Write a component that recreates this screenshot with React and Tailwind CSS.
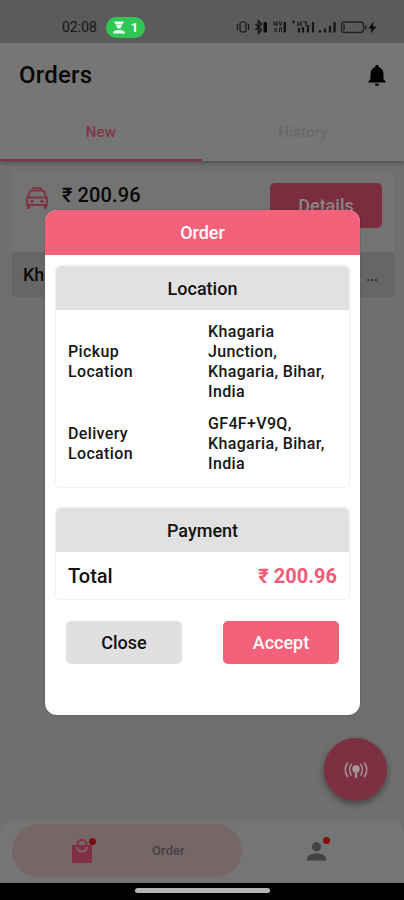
import React from 'react';
import { MdNotifications } from 'react-icons/md';

const locations = [
    { label: 'Pickup Location', value: 'Khagaria Junction, Khagaria, Bihar, India' },
    { label: 'Delivery Location', value: 'GF4F+V9Q, Khagaria, Bihar, India' },
];

const StatusIcons = () => (
    <svg width="142" height="16" viewBox="0 0 142 16" fill="none" stroke="#161616" strokeWidth="1.2">
        {/* vibrate */}
        <rect x="4" y="3" width="6" height="10" rx="2" />
        <path d="M1.500 5v6M12.500 5v6" />
        {/* bluetooth + level */}
        <path d="M19.500 5l6 6-3 3V2l3 3-6 6" strokeWidth="1.600" />
        <rect x="27.500" y="3" width="3.500" height="10.500" rx="1" fill="#0c0c0c" stroke="none" />
        {/* network speed */}
        <path d="M38 7V2.500l3 4.500V2.500M43 2.500l1.500 4.500 1-4.500M38 9l3 4M41 9l-3 4M43.500 13V9h2v4" strokeWidth="1" />
        <rect x="47.500" y="3" width="2.500" height="10.500" fill="#161616" stroke="none" />
        <path d="M56 3h3M57.500 1.500v3M62 7V2.500M65 2.500v4.500M62 5h3M67 3h3v4" />
        <path d="M63 13.500V9M67 13.500V8M72 13.500V6M77 13.500V3" strokeWidth="2.200" />
        <path d="M84 13.500v-2.500M89 13.500v-4M94 13.500V7M98.500 13.500V3" strokeWidth="2.300" />
        {/* battery */}
        <rect x="105.500" y="3" width="22" height="10.500" rx="3" strokeWidth="1.300" stroke="#222" />
        <path d="M108 5.500v5.500M129.700 6.500v4" strokeWidth="1.400" />
        <path d="M137.500 2.500l-5 7h3l-1 5 6-7h-3.500z" fill="#0c0c0c" stroke="none" />
    </svg>
);

const TaxiIcon = () => (
    <svg className="w-[22px] h-[22px] mt-[4px]" viewBox="0 0 22 22" fill="none" stroke="#7f3145" strokeWidth="2">
        <path d="M7.500 2.500V1h7v1.500" />
        <path d="M1.200 11.500L4 4.500q.4-1 1.500-1h11q1.100 0 1.500 1l2.800 7V18H1.200zM1.500 10.500h19" />
        <path d="M2.500 18v4M19.500 18v4" strokeWidth="3" />
        <circle cx="6" cy="14.300" r="1.600" fill="#7f3145" stroke="none" />
        <circle cx="16" cy="14.300" r="1.600" fill="#7f3145" stroke="none" />
    </svg>
);

const BagIcon = () => (
    <svg className="w-[20px] h-[24px]" viewBox="0 0 20 24" fill="none">
        <path d="M0 6h20v18H0z" fill="#803046" />
        <path d="M5.500 6.500V5.500a4.500 4.500 0 0 1 9 0v1" stroke="#803046" strokeWidth="2.200" />
        <path d="M5.200 8a4.800 4.500 0 0 0 9.600 0" stroke="#776668" strokeWidth="2.200" />
    </svg>
);

const PersonIcon = () => (
    <svg className="w-[19px] h-[19px]" viewBox="0 0 19 19" fill="#434343">
        <circle cx="9.500" cy="4.700" r="4.600" />
        <path d="M0 18.500v-2C0 13 5 11.500 9.500 11.500S19 13 19 16.500v2z" />
    </svg>
);

const StatusBar = () => (
    <div className="h-[43px] bg-[#5b5b5b] flex items-start justify-between pt-[17px] pl-[62px] pr-[26px]">
        <div className="flex items-center gap-2">
            <span className="text-[14px] leading-[21px] w-9 text-[#161616]">02:08</span>
            <div className="w-[39px] h-[21px] rounded-full bg-[#2fc653] flex items-center justify-center gap-[6px] text-white">
                <svg width="12" height="13" viewBox="0 0 12 13" fill="#e8ffee">
                    <path d="M1 0.500h10L9.500 3.500h-7zM3 4h6L7.500 7.500h-3zM0 12.500c0-2.500 2-3.500 6-3.500s6 1 6 3.500z" />
                </svg>
                <span className="text-[13px] font-bold">1</span>
            </div>
        </div>
        <div className="pt-[2px]">
            <StatusIcons />
        </div>
    </div>
);

const Header = () => (
    <div className="h-[118px] bg-[#767676] shadow-[0_2px_4px_rgba(0,0,0,0.3)] relative flex flex-col">
        <div className="h-[64px] pl-[19px] pr-[14px] flex items-center justify-between">
            <h1 className="text-[24px] tracking-[0.2px] font-medium text-[#060606]">Orders</h1>
            <MdNotifications className="w-[26px] h-[26px] text-black" />
        </div>
        <div className="flex-1 grid grid-cols-2 text-[15px] font-medium text-center">
            <div className="border-b-2 border-[#7d3042] text-[#85344a] pt-[14px] tracking-[0.2px]">New</div>
            <div className="text-[#686868] pt-[14px] tracking-[0.2px]">History</div>
        </div>
    </div>
);

const OrderCard = () => (
    <div className="mt-[11px] ml-[12px] mr-[10px] h-[125px] bg-[#737373] flex flex-col justify-between">
        <div className="flex items-start justify-between pt-[11px] pl-[14px] pr-[12px]">
            <div className="flex items-start gap-[14px]">
                <TaxiIcon />
                <span className="text-[20px] leading-[25px] tracking-[0.1px] font-medium text-[#080808]">₹ 200.96</span>
            </div>
            <button className="w-[112px] h-[45px] rounded-[5px] bg-[#7b2c3f] text-[#8d8488] text-[18px] font-medium">Details</button>
        </div>
        <div className="h-[45px] bg-[#666666] flex items-center justify-between px-[11px] pr-[16px] text-[18px] font-medium text-[#0a0a0a]">
            <span>Kh</span>
            <span className="text-[#2a2a2a] text-[14px] pt-[4px]">...</span>
        </div>
    </div>
);

const BottomNav = () => (
    <div className="h-[63px] bg-[#757575] rounded-t-[14px] flex items-center pl-[12px] pr-[12px] pb-[2px]">
        <div className="w-[230px] h-[53px] rounded-full bg-[#776668] flex items-center">
            <div className="relative ml-[60px]">
                <BagIcon />
                <span className="absolute -top-px -right-[4px] w-[7px] h-[7px] rounded-full bg-[#7a0b12]" />
            </div>
            <span className="ml-[60px] text-[13px] tracking-[0.1px] font-medium text-[#454142]">Order</span>
        </div>
        <div className="flex-1 flex justify-center">
            <div className="relative pt-px pr-px">
                <PersonIcon />
                <span className="absolute -top-[4px] -right-[3px] w-[7px] h-[7px] rounded-full bg-[#860c0c]" />
            </div>
        </div>
    </div>
);

const Fab = () => (
    <button className="absolute right-[17px] bottom-[99px] w-[63px] h-[63px] rounded-full bg-[#7d3042] shadow-[0_3px_7px_rgba(0,0,0,0.4)] flex items-center justify-center">
        <svg width="24" height="18" viewBox="0 0 24 18" fill="none" stroke="#a08f94" strokeWidth="1.600" strokeLinecap="round">
            <path d="M3.500 2c-3 4-3 9.500 0 13.500M7.200 3.500c-2 3-2 7.500 0 10.500M20.500 2c3 4 3 9.500 0 13.500M16.800 3.500c2 3 2 7.500 0 10.500" />
            <circle cx="12" cy="8" r="3.700" fill="#a9999e" stroke="none" />
            <path d="M12 10v6" strokeWidth="2.400" />
        </svg>
    </button>
);

const Section = ({ title, children }) => (
    <section className="rounded-[5px] bg-white shadow-[0_0_2px_1px_rgba(0,0,0,0.07)] overflow-hidden">
        <h3 className="h-[44px] bg-[#e1e1e1] flex items-center justify-center text-[18px] font-medium text-[#111]">{title}</h3>
        {children}
    </section>
);

const OrderDialog = () => (
    <div className="absolute left-[45px] top-[210px] w-[315px] h-[505px] rounded-[12px] bg-white overflow-hidden shadow-[0_0_2px_rgba(0,0,0,0.3)]">
        <h2 className="h-[45px] bg-[#f4617a] text-white text-[18px] font-medium flex items-center justify-center">Order</h2>
        <div className="px-[11px] pt-[11px]">
            <Section title="Location">
                <div className="pt-[12px] px-[12px] pb-[13px] flex flex-col gap-[12px]">
                    {locations.map((l) => (
                        <div key={l.label} className="flex items-center text-[16px] leading-[20px] tracking-[0.35px] font-medium text-[#161616]">
                            <div className="w-[140px] pr-[60px]">{l.label}</div>
                            <div className="w-[124px]">{l.value}</div>
                        </div>
                    ))}
                </div>
            </Section>
            <div className="mt-[21px]">
                <Section title="Payment">
                    <div className="h-[47px] px-[12px] flex items-center justify-between text-[20px] font-medium">
                        <span className="text-[#111]">Total</span>
                        <span className="text-[#ee5c78] font-bold">₹ 200.96</span>
                    </div>
                </Section>
            </div>
            <div className="mt-[22px] px-[10px] flex justify-between text-[18px] font-medium">
                <button className="w-[116px] h-[43px] rounded-[5px] bg-[#e0e0e0] text-[#111]">Close</button>
                <button className="w-[116px] h-[43px] rounded-[5px] bg-[#f4617a] text-white">Accept</button>
            </div>
        </div>
    </div>
);

const App = () => (
    <div className="relative w-[404px] h-[900px] bg-[#6f6f6f] overflow-hidden flex flex-col font-[Roboto,'Noto_Sans',sans-serif]">
        <StatusBar />
        <Header />
        <main className="flex-1">
            <OrderCard />
        </main>
        <BottomNav />
        <div className="h-[17px] bg-black flex justify-center pt-[5px]">
            <div className="w-[135px] h-[5px] rounded-full bg-[#b4b4b4]" />
        </div>
        <Fab />
        <OrderDialog />
    </div>
);

export default App;
